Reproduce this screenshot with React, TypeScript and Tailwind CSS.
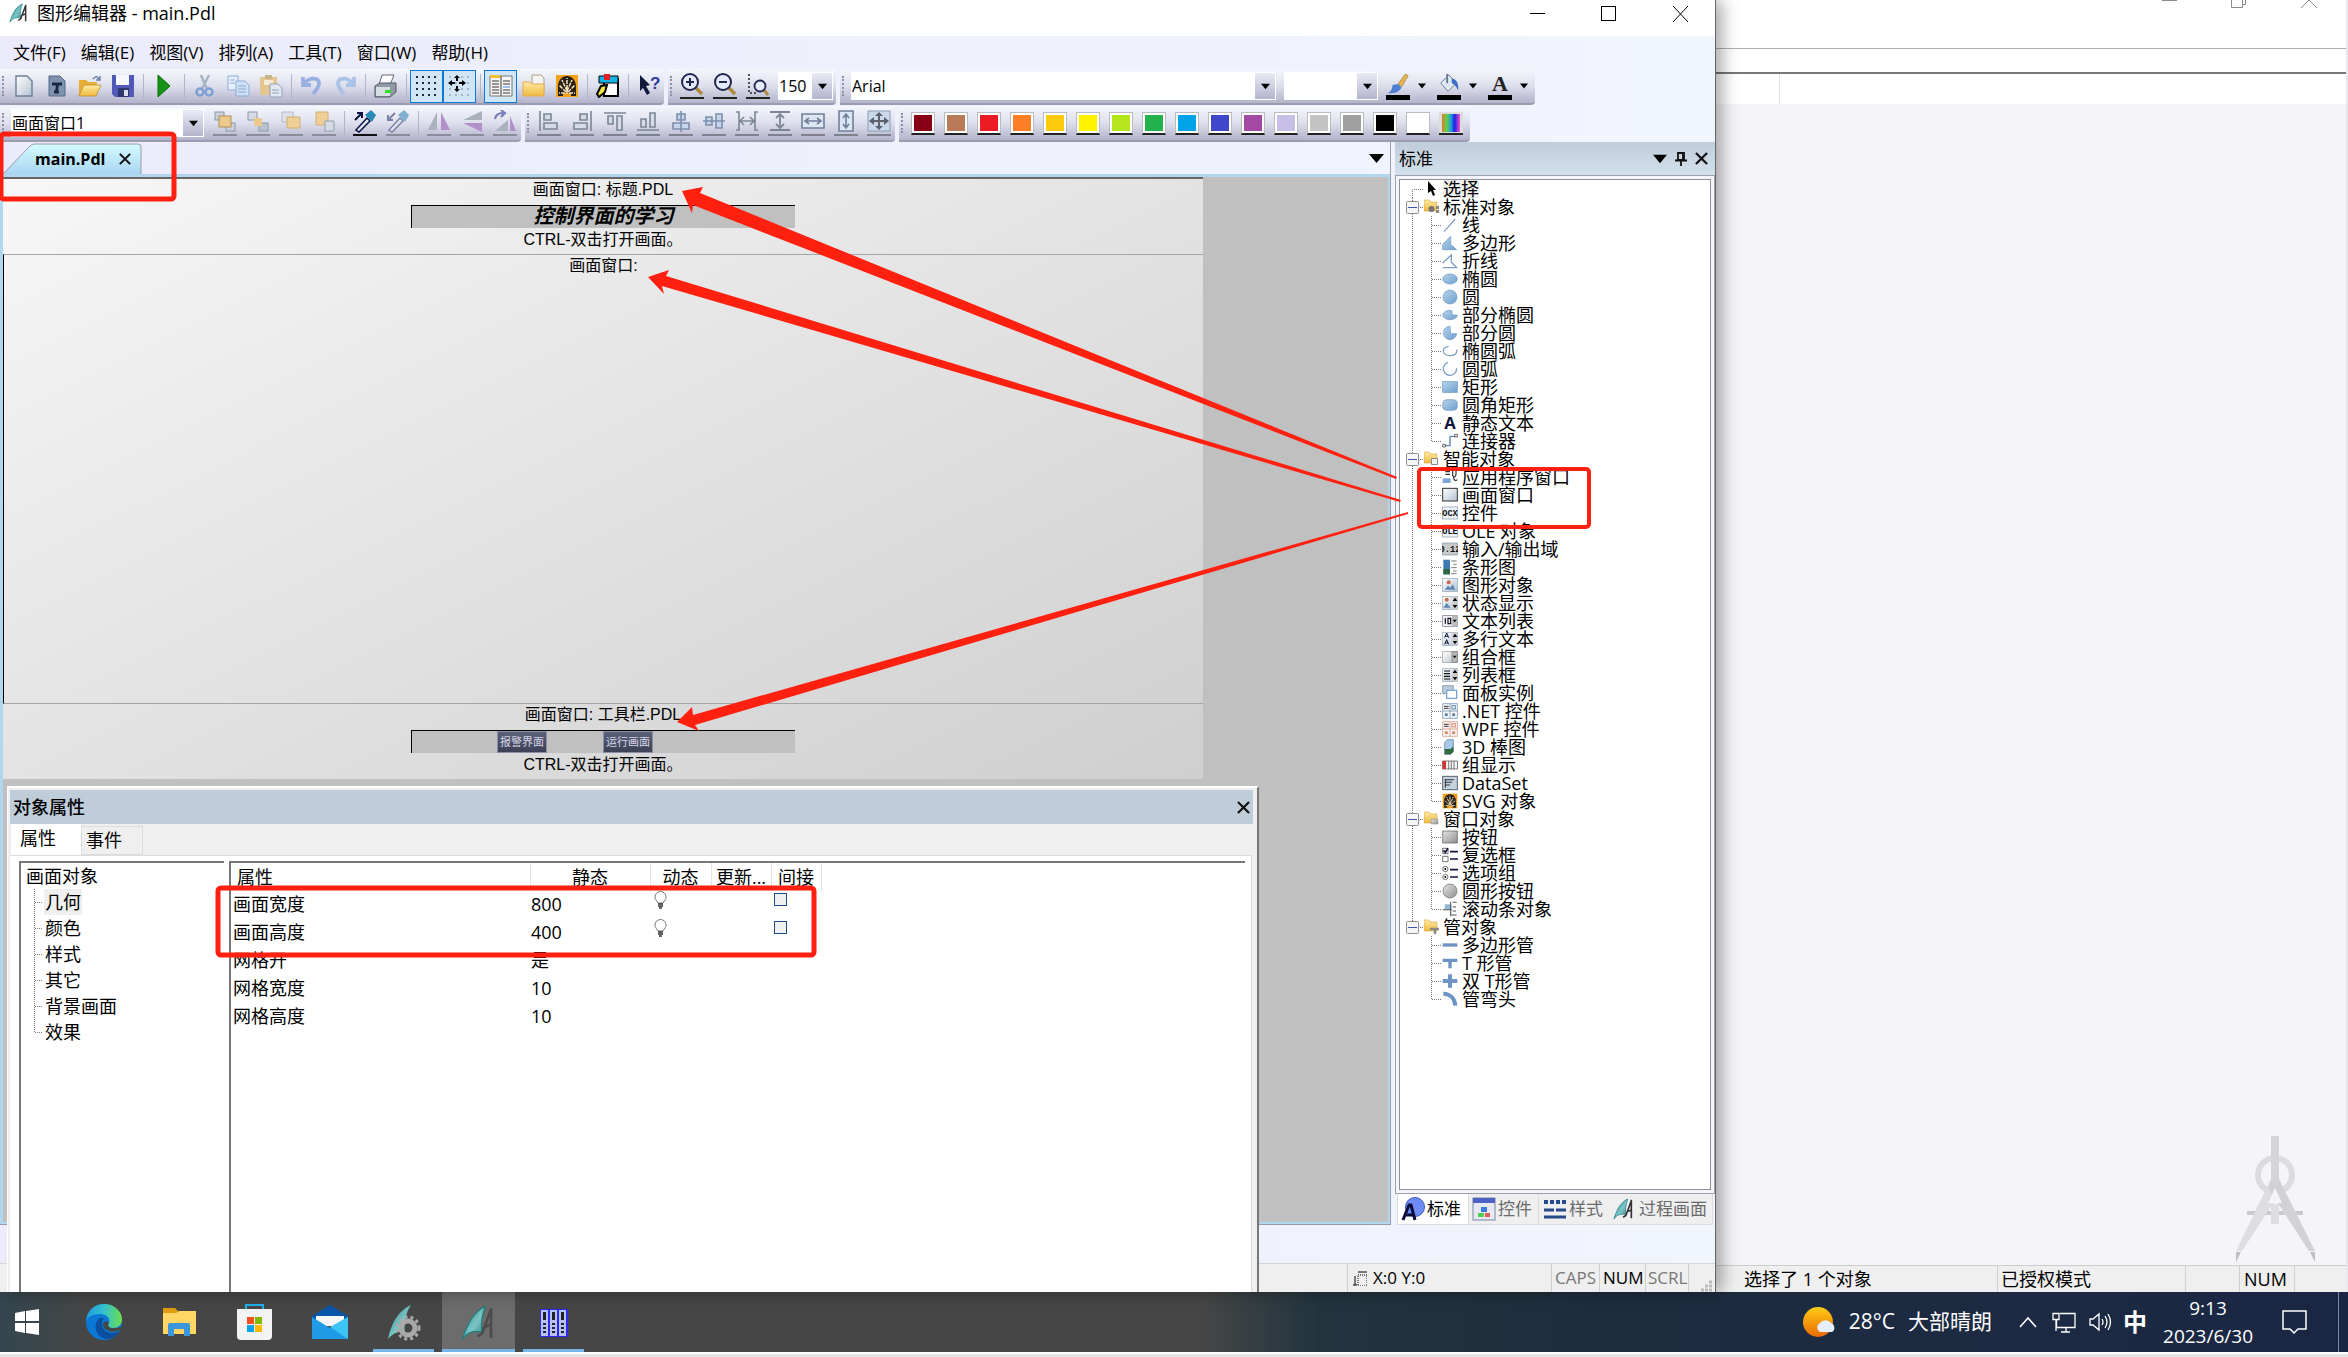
import type { ReactNode } from "react";

/* ---------- shared drawings ---------- */

const Svg = ({ size = 24, children }: { size?: number; children: ReactNode }) => (
  <svg width={size} height={size} viewBox="0 0 24 24" className="shrink-0" aria-hidden="true">
    {children}
  </svg>
);

const Sail = ({ size = 24, tip = "#333" }: { size?: number; tip?: string }) => (
  <Svg size={size}>
    <path d="M16 1C8 5 4 13 1 23c3-5 8-6 13-5-1-5 0-11 2-17Z" fill="url(#sail)" stroke="#1f7f7f" strokeWidth=".8" />
    <path d="m20 3-6 16-3 2M20 2v20M15 15l5-2" stroke={tip} strokeWidth="1.8" fill="none" />
  </Svg>
);

const Gradients = () => (
  <svg width="0" height="0" className="absolute" aria-hidden="true">
    <defs>
      <linearGradient id="sail" x1="0" y1="0" x2="1" y2="1">
        <stop offset="0" stopColor="#1f8a8a" />
        <stop offset=".55" stopColor="#7cc4c6" />
        <stop offset="1" stopColor="#1f7f80" />
      </linearGradient>
      <linearGradient id="blue" x1="0" y1="0" x2="1" y2="1">
        <stop offset="0" stopColor="#b5d3ec" />
        <stop offset="1" stopColor="#6f9fcc" />
      </linearGradient>
      <linearGradient id="gray" x1="0" y1="0" x2="1" y2="1">
        <stop offset="0" stopColor="#e4e4e4" />
        <stop offset="1" stopColor="#8f8f8f" />
      </linearGradient>
      <linearGradient id="paper" x1="0" y1="0" x2="1" y2="1">
        <stop offset="0" stopColor="#ffffff" />
        <stop offset="1" stopColor="#b3c2d0" />
      </linearGradient>
      <linearGradient id="folder" x1="0" y1="0" x2="0" y2="1">
        <stop offset="0" stopColor="#fdeaa4" />
        <stop offset="1" stopColor="#f0b93f" />
      </linearGradient>
      <linearGradient id="rainbow" x1="0" y1="0" x2="1" y2="0">
        <stop offset="0" stopColor="#e07a30" />
        <stop offset=".25" stopColor="#60d040" />
        <stop offset=".5" stopColor="#20a0e0" />
        <stop offset=".7" stopColor="#2020e0" />
        <stop offset="1" stopColor="#f050d0" />
      </linearGradient>
      <linearGradient id="sun" x1="0" y1="0" x2="0" y2="1">
        <stop offset="0" stopColor="#ffcc12" />
        <stop offset="1" stopColor="#ea6a0a" />
      </linearGradient>
      <linearGradient id="edge" x1="0" y1="0" x2="1" y2="0">
        <stop offset="0" stopColor="#1f9be0" />
        <stop offset=".5" stopColor="#35c1d0" />
        <stop offset="1" stopColor="#6be04a" />
      </linearGradient>
    </defs>
  </svg>
);

/* ---------- toolbars ---------- */

const flower = (
  <>
    <rect x="1" y="1" width="22" height="22" fill="#f5a11a" />
    <path d="M3 22V13C3 6 7 2 12 2s9 4 9 11v9h-5v-3H8v3Z" fill="#2a2018" />
    <path d="M12 20V4M12 17 7 6M12 17l5-11M11 18l-7-7M13 18l7-7M10 19H4M14 19h6" stroke="#f3e3c0" strokeWidth="1.5" strokeDasharray="4 1" />
  </>
);

const pipette = (main: string, dark: string, flip: boolean) => (
  <>
    <path d="M3 20 14 8l3 3L6 22Z" fill="#dfe8f0" stroke={dark} strokeWidth="1.5" />
    <path d="m12 5 7 7 4-7-5-5Z" fill={main} />
    <path d={flip ? "M9 3 2 10M2 5v5h5" : "M2 10l7-7M4 3h5v5"} stroke={dark} strokeWidth="2" fill="none" />
  </>
);

const magnifier = (inner: ReactNode) => (
  <>
    <path d="m15 14 7 7" stroke="#b08a3c" strokeWidth="3.5" />
    <circle cx="10" cy="9" r="8" fill="#e4ebfa" stroke="#23264e" strokeWidth="2" />
    {inner}
  </>
);

const stack = (a: string, b: string, front: ReactNode) => (
  <>
    <rect x="2" y="2" width="9" height="8" fill={a} stroke="#8d99a8" />
    <rect x="13" y="13" width="9" height="8" fill={b} stroke="#8d99a8" />
    {front}
  </>
);

const tools: Record<string, ReactNode> = {
  new: <path d="M4 2h11l5 5v15H4Z" fill="url(#paper)" stroke="#6c7f98" strokeWidth="1.4" />,
  template: (
    <>
      <path d="M4 2h11l5 5v15H4Z" fill="#7f92ae" stroke="#566a88" />
      <path d="M7 10h10M12.500 10l-1 8M9 18h5" stroke="#1b2744" strokeWidth="2.8" />
    </>
  ),
  open: (
    <>
      <path d="M1 6h7l2 2h9v4H6L1 22Z" fill="#e7ae35" />
      <path d="M6 11h17l-5 11H1Z" fill="url(#folder)" stroke="#bb8520" strokeWidth=".7" />
      <path d="M15 5q4-5 6 1M22 2v4h-4" stroke="#6c83a8" strokeWidth="1.5" fill="none" />
    </>
  ),
  save: (
    <>
      <path d="M1 1h22v22H4l-3-3Z" fill="#5058b8" />
      <path d="M5 1h13v10H5Z" fill="#f5f7ff" />
      <path d="M7 14h11v9H7Z" fill="#2f376e" />
      <path d="M13 16h4v6h-4Z" fill="#dde" />
    </>
  ),
  run: <path d="m6 1 12 11L6 23Z" fill="#179217" stroke="#0b6d0b" />,
  cut: (
    <>
      <path d="m8 1 6 14M16 1 9 15" stroke="#a9b5c5" strokeWidth="2.5" />
      <circle cx="7" cy="18" r="3.5" stroke="#7c9fd4" strokeWidth="2.5" fill="none" />
      <circle cx="16" cy="18" r="3.5" stroke="#7c9fd4" strokeWidth="2.5" fill="none" />
    </>
  ),
  copy: (
    <>
      <path d="M2 2h10v14H2Z" fill="#e6effb" stroke="#8eabd6" />
      <path d="M10 7h9l4 4v11H10Z" fill="#cfe0f6" stroke="#8eabd6" />
      <path d="M4 6h5M4 9h5M12 12h8M12 15h8M12 18h8" stroke="#8eabd6" />
    </>
  ),
  paste: (
    <>
      <path d="M1 3h17v18H1Z" fill="#e3c68f" />
      <path d="M6 1h7v4H6Z" fill="#c5b48c" />
      <path d="M5 6h9v5H5Z" fill="#f4ecda" />
      <path d="M11 10h8l4 4v9H11Z" fill="#e1e7f0" stroke="#93a2b8" />
      <path d="M13 16h7M13 19h7" stroke="#93a2b8" />
    </>
  ),
  undo: <path d="M3 3v8h8M4 10C8 4 18 2 19 9c0 5-3 7-6 11" stroke="#98afe2" strokeWidth="3.8" fill="none" />,
  redo: <path d="M21 3v8h-8M20 10C16 4 6 2 5 9c0 5 3 7 6 11" stroke="#a9c3e8" strokeWidth="3.8" fill="none" />,
  print: (
    <>
      <path d="M8 1h12l-4 10H5Z" fill="#fff" stroke="#667" />
      <path d="M1 12 6 9h16v9l-6 5H1Z" fill="#8f9aa5" stroke="#4d5861" />
      <path d="M2 13h14v9H2Z" fill="#d7dde3" />
      <path d="M11 16h6v3h-6Z" fill="#2ee01e" />
    </>
  ),
  grid: <path d="M1 3h22M1 9h22M1 15h22M1 21h22" stroke="#1f2937" strokeWidth="2" strokeDasharray="2 4" />,
  snap: (
    <>
      <path d="M1 3h22M1 9h22M1 15h22M1 21h22" stroke="#98a5b3" strokeWidth="1.5" strokeDasharray="2 4" />
      <path d="m9 1-3 3h6ZM9 18l-3-3h6ZM0 9l4-3v6ZM18 9l-4-3v6Z" fill="#000" />
      <path d="M9 3v4M9 12v4M3 9h4M11 9h4" stroke="#000" strokeWidth="2" />
    </>
  ),
  library: (
    <>
      <path d="M1 2h11v20H1ZM12 2h11v20H12Z" fill="#f5f5f5" stroke="#777" />
      <path d="M1 1h10v3H1Z" fill="#f0c030" />
      <path d="M3 7h7M3 10h7M3 13h7M3 16h7M3 19h7M14 7h7M14 10h7M14 16h7M14 19h7" stroke="#777" strokeWidth="1.3" />
      <path d="M14 13h7" stroke="#3f8be0" />
    </>
  ),
  folders: (
    <>
      <path d="M10 1h9l3 3v12H10Z" fill="#f3f3f3" stroke="#b0a080" />
      <path d="M1 8h7l2 2h12v12H1Z" fill="url(#folder)" stroke="#e0a94d" />
    </>
  ),
  svg: flower,
  report: (
    <>
      <path d="M8 5h14v17H8Z" fill="#fff" stroke="#000" strokeWidth="2" />
      <path d="M3 2h19v7H3Z" fill="#12b5e8" stroke="#000" />
      <path d="M8 0h6v6H8Z" fill="#e02020" />
      <path d="m1 20 4-8 6-1-2 7-6 5Z" fill="#f5e93c" stroke="#000" strokeWidth="2" />
    </>
  ),
  help: (
    <>
      <path d="m3 1 10 10-4 1 4 7-3 2-4-7-3 3Z" fill="#111a3c" />
      <text x="13" y="15" fontSize="17" fontWeight="700" fill="#2c3b9c" fontFamily="Liberation Sans">?</text>
    </>
  ),
  zoomIn: magnifier(<path d="M6 9h8M10 5v8" stroke="#23264e" strokeWidth="2" />),
  zoomOut: magnifier(<path d="M6 9h8" stroke="#23264e" strokeWidth="2" />),
  zoomArea: (
    <>
      <path d="M3 1v19h8" stroke="#222" strokeWidth="1.5" strokeDasharray="2 2" fill="none" />
      <path d="m18 17 4 5" stroke="#b08a3c" strokeWidth="3" />
      <circle cx="14" cy="13" r="5.500" fill="#e4ebfa" stroke="#23264e" strokeWidth="1.8" />
    </>
  ),
  front: stack("#c9d2dc", "#c9d2dc", <rect x="6" y="6" width="12" height="11" fill="#eec98c" stroke="#b08f5c" />),
  back: stack("#d4dbe3", "#b7c2ce", <rect x="8" y="8" width="8" height="8" fill="#eec98c" />),
  forward: (
    <>
      <path d="M3 2h11v10H3Z" fill="#dfe2e6" stroke="#b6bcc5" />
      <path d="M8 7h13v11H8Z" fill="#eecf98" stroke="#cfae78" />
    </>
  ),
  backward: (
    <>
      <path d="M4 2h12v13H4Z" fill="#eecf98" stroke="#cfae78" />
      <path d="M13 11h9v10h-9Z" fill="#d4dbe3" stroke="#93a0ae" />
    </>
  ),
  pick: pipette("#2c8ab8", "#0c1240", false),
  apply: pipette("#7fb0cf", "#7c82a5", true),
  mirrorH: (
    <>
      <path d="M10 2v18H1Z" fill="#a9b2bc" />
      <path d="M14 2v18h9Z" fill="#b48fc9" />
    </>
  ),
  mirrorV: (
    <>
      <path d="M22 1v9H3Z" fill="#a9b2bc" />
      <path d="M22 22v-9H3Z" fill="#b48fc9" />
    </>
  ),
  rotate: (
    <>
      <path d="M15 10v11H2Z" fill="#a9b2bc" />
      <path d="M17 6v15h6Z" fill="#b48fc9" />
      <path d="M2 9q1-6 8-6M8 0l4 3-4 4" stroke="#7378b8" strokeWidth="2" fill="none" />
    </>
  ),
  left: <path d="M3 1v20M7 4h7v6H7ZM7 13h13v6H7Z" fill="#d5dce6" stroke="#7c8694" strokeWidth="1.6" />,
  right: <path d="M21 1v20M10 4h7v6h-7ZM4 13h13v6H4Z" fill="#d5dce6" stroke="#7c8694" strokeWidth="1.6" />,
  top: <path d="M1 3h22M5 6h5v8H5ZM14 6h5v14h-5Z" fill="#d5dce6" stroke="#7c8694" strokeWidth="1.6" />,
  bottom: <path d="M1 20h22M5 9h5v8H5ZM14 3h5v14h-5Z" fill="#d5dce6" stroke="#7c8694" strokeWidth="1.6" />,
  midV: <path d="M12 1v21M8 4h8v6H8ZM4 13h16v6H4Z" fill="#c6d5ea" stroke="#7c8fae" strokeWidth="1.6" />,
  midH: <path d="M1 11h22M4 7h6v8H4ZM14 4h6v14h-6Z" fill="#c6d5ea" stroke="#7c8fae" strokeWidth="1.6" />,
  spaceH: <path d="M1 2h3v18H1M23 2h-3v18h3M5 11h14M9 7l-4 4 4 4M15 7l4 4-4 4" fill="none" stroke="#7c8694" strokeWidth="1.6" />,
  spaceV: <path d="M2 2h20M2 20h20M12 4v14M8 8l4-4 4 4M8 14l4 4 4-4" fill="none" stroke="#7c8694" strokeWidth="1.8" />,
  sameW: <path d="M1 4h22v14H1ZM4 11h16M8 8l-4 3 4 3M16 8l4 3-4 3" fill="#dce6f3" stroke="#70809a" strokeWidth="1.6" />,
  sameH: <path d="M5 1h14v20H5ZM12 4v14M9 8l3-4 3 4M9 14l3 4 3-4" fill="#dce6f3" stroke="#70809a" strokeWidth="1.6" />,
  same: (
    <>
      <rect x="1" y="1" width="22" height="20" fill="#c9d8ea" stroke="#8c9db4" />
      <path d="M12 2 8 6h3v4H7V7l-5 4 5 4v-3h4v4H8l4 4 4-4h-3v-4h4v3l5-4-5-4v3h-4V6h3Z" fill="#5b626d" />
    </>
  ),
  brush: (
    <>
      <path d="m12 12 8-11 3 2-7 12Z" fill="#e7b549" stroke="#94703a" strokeWidth=".7" />
      <path d="M1 22q5-3 5-9l6-1 4 4q-4 7-15 6Z" fill="#4d7ed2" />
    </>
  ),
  bucket: (
    <>
      <path d="m3 11 9-9 8 9-9 9Z" fill="#dfe7f1" stroke="#63788f" />
      <path d="M10 1v10" stroke="#63788f" strokeWidth="2" />
      <path d="M15 6q8 1 7 13-3-6-7-8Z" fill="#3c6fc4" />
    </>
  ),
};

const ToolButton = ({ name, label, active, underline }: { name: string; label: string; active?: boolean; underline?: string }) => (
  <button
    type="button"
    aria-label={label}
    className={
      active
        ? "flex h-[33px] w-[33px] shrink-0 flex-col items-center justify-center border border-[#0a7ad6] bg-[#d0e5f5]"
        : "flex h-[33px] w-[33px] shrink-0 flex-col items-center justify-center"
    }
  >
    <Svg>{tools[name]}</Svg>
    {underline && <span className="h-[2px] w-6" style={{ background: underline }} />}
  </button>
);

const Sep = () => (
  <span className="flex w-2 shrink-0 justify-center">
    <span className="h-6 w-px bg-[#b3b4c4]" />
  </span>
);

const Grip = () => <span className="mx-[2px] h-5 w-[3px] shrink-0 border-l-2 border-dotted border-[#8d8fa6]" />;

const Arrow = ({ size = 10 }: { size?: number }) => (
  <svg width={size} height={size} viewBox="0 0 10 10" className="shrink-0" aria-hidden="true">
    <path d="M0 2h10L5 8Z" fill="#000" />
  </svg>
);

const Combo = ({ label, value, className }: { label: string; value: string; className: string }) => (
  <div className={`flex h-[28px] items-stretch border border-white bg-white ${className}`}>
    <select aria-label={label} className="min-w-0 flex-1 appearance-none bg-white text-[16px] leading-[26px] text-black outline-none">
      <option>{value}</option>
    </select>
    <span className="pointer-events-none flex w-[20px] items-center justify-center bg-linear-to-b from-[#e9ebf6] to-[#b4b5cd]">
      <Arrow size={9} />
    </span>
  </div>
);

const bar = "flex h-[36px] items-center rounded-br border-b-2 border-[#9c9cb0] bg-linear-to-b from-[#f5f7fd] via-[#dddfec] to-[#b3b3cc]";

const swatches = [
  "#880015", "#b97a57", "#ed1c24", "#ff7f27", "#ffc90e", "#fff200", "#b5e61d", "#22b14c",
  "#00a2e8", "#3f48cc", "#a349a4", "#c8bfe7", "#c3c3c3", "#9f9f9f", "#000000", "#ffffff",
];

const Toolbars = () => (
  <div className="flex flex-col gap-px">
    <div className="flex gap-1">
      <div className={`${bar} w-[664px]`}>
        <Grip />
        <ToolButton name="new" label="新建" />
        <ToolButton name="template" label="模板" />
        <ToolButton name="open" label="打开" />
        <ToolButton name="save" label="保存" />
        <Sep />
        <ToolButton name="run" label="运行" />
        <Sep />
        <ToolButton name="cut" label="剪切" />
        <ToolButton name="copy" label="复制" />
        <ToolButton name="paste" label="粘贴" />
        <Sep />
        <ToolButton name="undo" label="撤消" />
        <ToolButton name="redo" label="重做" />
        <Sep />
        <ToolButton name="print" label="打印" />
        <Sep />
        <ToolButton name="grid" label="网格" active />
        <ToolButton name="snap" label="对齐网格" active />
        <Sep />
        <ToolButton name="library" label="属性窗口" active />
        <ToolButton name="folders" label="库" />
        <ToolButton name="svg" label="SVG" />
        <Sep />
        <ToolButton name="report" label="动态向导" />
        <Sep />
        <ToolButton name="help" label="帮助" />
      </div>
      <div className={`${bar} w-[168px]`}>
        <Grip />
        <ToolButton name="zoomIn" label="放大" underline="#222" />
        <ToolButton name="zoomOut" label="缩小" underline="#222" />
        <ToolButton name="zoomArea" label="缩放区域" underline="#222" />
        <Combo label="缩放" value="150" className="ml-1 w-[55px]" />
      </div>
      <div className={`${bar} w-[695px]`}>
        <Grip />
        <Combo label="字体" value="Arial" className="ml-1 w-[425px]" />
        <Combo label="字号" value="" className="ml-2 w-[94px]" />
        {["brush", "bucket"].map((n) => (
          <div key={n} className="ml-1 flex items-center">
            <button type="button" aria-label={n} className="flex w-8 flex-col items-center">
              <Svg size={22}>{tools[n]}</Svg>
              <span className="h-[5px] w-6 bg-black" />
            </button>
            <span className="flex w-[15px] justify-center"><Arrow size={8} /></span>
          </div>
        ))}
        <div className="ml-1 flex items-center">
          <button type="button" className="flex w-8 flex-col items-center">
            <span className="h-[22px] font-['Liberation_Serif',serif] text-[22px] leading-[22px] font-bold text-[#222]">A</span>
            <span className="h-[5px] w-6 bg-black" />
          </button>
          <span className="flex w-[15px] justify-center"><Arrow size={8} /></span>
        </div>
      </div>
    </div>
    <div className="flex gap-1">
      <div className={`${bar} w-[521px]`}>
        <Grip />
        <Combo label="对象" value="画面窗口1" className="mx-1 w-[193px]" />
        {["front", "back", "forward", "backward"].map((n) => (
          <ToolButton key={n} name={n} label={n} underline="#8a8b9b" />
        ))}
        <Sep />
        <ToolButton name="pick" label="复制属性" underline="#111" />
        <ToolButton name="apply" label="分配属性" underline="#8a8b9b" />
        <Sep />
        {["mirrorH", "mirrorV", "rotate"].map((n) => (
          <ToolButton key={n} name={n} label={n} underline="#8a8b9b" />
        ))}
      </div>
      <div className={`${bar} w-[370px]`}>
        <Grip />
        {["left", "right", "top", "bottom", "midV", "midH", "spaceH", "spaceV", "sameW", "sameH", "same"].map((n) => (
          <ToolButton key={n} name={n} label={n} underline="#80818f" />
        ))}
      </div>
      <div className={`${bar} w-[571px]`}>
        <Grip />
        {swatches.map((c) => (
          <button key={c} type="button" aria-label={c} className="flex h-[33px] w-[33px] shrink-0 items-center justify-center">
            <span className="h-[23px] w-6 border border-b-2 border-[#bcbcbc] border-b-[#222] bg-white p-[2px]">
              <span className="block h-full" style={{ background: c }} />
            </span>
          </button>
        ))}
        <button type="button" aria-label="调色板" className="flex h-[33px] w-[33px] shrink-0 items-center justify-center">
          <svg width="24" height="23" aria-hidden="true">
            <rect width="24" height="22" fill="#ddd" />
            <rect x="3" y="2" width="18" height="18" fill="url(#rainbow)" />
            <rect y="21" width="24" height="2" fill="#222" />
          </svg>
        </button>
      </div>
    </div>
  </div>
);

/* ---------- object palette ---------- */

const chooser = (
  <>
    <rect x="16" y="2" width="7" height="20" fill="#ccc" />
    <path d="M16 9h7l-3.500-5ZM16 15h7l-3.500 5Z" fill="#000" />
  </>
);
const frame = <rect x="1" y="2" width="22" height="20" fill="url(#paper)" stroke="#8fa5bb" />;
const tiny = (t: string, fill: string) => (
  <>
    <rect x="1" y="3" width="22" height="18" fill={fill} stroke="#7e93a8" />
    <text x="12" y="17" fontSize="13" textAnchor="middle" fontWeight="700" fill="#111" fontFamily="Liberation Sans Narrow, Liberation Mono">{t}</text>
  </>
);
const grids = (c: string) => (
  <>
    <path d="M1 1h22v22H1ZM12 1v22M1 12h22" fill="#f7f7f7" stroke={c} />
    <path d="M3 5h7M3 8h7" stroke="#333" strokeWidth="1.5" />
    <rect x="15" y="4" width="5" height="5" fill="none" stroke={c} strokeWidth="1.5" />
    <circle cx="6.500" cy="17.500" r="2.500" fill={c} />
    <circle cx="17.500" cy="17.500" r="2.500" fill={c} />
  </>
);

const shapes: Record<string, ReactNode> = {
  线: <path d="M3 22 20 3" stroke="#7f9fc6" strokeWidth="2" />,
  多边形: <path d="M1 22V14L13 2v12l9 8Z" fill="url(#blue)" stroke="#6e95c0" />,
  折线: <path d="M1 15 14 3v11l8 8H1" stroke="#7f9fc6" strokeWidth="2" fill="none" />,
  椭圆: <ellipse cx="12" cy="12" rx="11" ry="7.500" fill="url(#blue)" stroke="#6e95c0" />,
  圆: <circle cx="12" cy="12" r="10.500" fill="url(#blue)" stroke="#6e95c0" />,
  部分椭圆: <path d="M12 5A11 7 0 1 0 23 12H15V6Z" fill="url(#blue)" stroke="#6e95c0" />,
  部分圆: <path d="M12 2A10 10 0 1 0 22 13H13Z" fill="url(#blue)" stroke="#6e95c0" />,
  椭圆弧: <path d="M10 5C-2 7 0 18 12 19q11 0 10-9" stroke="#7f9fc6" strokeWidth="2" fill="none" />,
  圆弧: <path d="M9 2a10 10 0 1 0 13 9" stroke="#7f9fc6" strokeWidth="2" fill="none" />,
  矩形: <rect x="1" y="4" width="22" height="16" fill="url(#blue)" stroke="#6e95c0" />,
  圆角矩形: <rect x="1" y="4" width="22" height="16" rx="6" fill="url(#blue)" stroke="#6e95c0" />,
  静态文本: <text x="12" y="21" fontSize="25" fontWeight="700" textAnchor="middle" fill="#14143c" fontFamily="Open Sans">A</text>,
  连接器: (
    <>
      <path d="M4 19h8V5h8" stroke="#5b80b0" strokeWidth="2" fill="none" />
      <path d="M1 17h4v4H1ZM19 2h4v4h-4Z" fill="#fff" stroke="#222" />
    </>
  ),
  应用程序窗口: (
    <>
      <path d="M1 14h12v7H1Z" fill="#7fa5d8" />
      <path d="M5 4h7M5 8h7M16 3v7q4 4 5-2V3M17 12q2 8 6 4" stroke="#333" strokeWidth="1.8" fill="none" />
    </>
  ),
  画面窗口: <rect x="1" y="2" width="22" height="19" fill="url(#paper)" stroke="#333" strokeWidth="1.500" />,
  控件: tiny("OCX", "#eef4fa"),
  "OLE 对象": tiny("OLE", "#eef4fa"),
  "输入/输出域": tiny("0.12", "#c9c9c9"),
  条形图: (
    <>
      <path d="M2 1h10v22H2Z" fill="#3f7ab5" />
      <path d="M2 15h10v8H2Z" fill="#2e6a3c" />
      <path d="M14 3h8M17 8h5M14 13h8M17 18h5M14 22h8" stroke="#777" strokeWidth="1.5" />
    </>
  ),
  图形对象: (
    <>
      {frame}
      <circle cx="10" cy="8" r="3" fill="#d0664a" />
      <path d="m4 19 5-6 3 3 4-5 4 8Z" fill="#5f86b5" />
    </>
  ),
  状态显示: (
    <>
      {frame}
      <circle cx="7" cy="7" r="3" fill="#d0664a" />
      <path d="m2 19 5-7 6 7Z" fill="#5f86b5" />
      {chooser}
    </>
  ),
  文本列表: (
    <>
      <rect x="1" y="4" width="22" height="16" fill="#eef" stroke="#777" />
      <path d="M5 8v8M9 8h4v8H9Z" stroke="#111" strokeWidth="1.8" fill="none" />
      <path d="M15 4h8v16h-8Z" fill="#bbb" />
      <path d="M16 10h6l-3 4Z" />
    </>
  ),
  多行文本: (
    <>
      {frame}
      <path d="m4 10 3-7 3 7M5 8h4M4 20l3-7 3 7M5 18h4" stroke="#14143c" strokeWidth="1.5" fill="none" />
      {chooser}
    </>
  ),
  组合框: (
    <>
      <rect x="1" y="4" width="22" height="16" fill="url(#paper)" stroke="#999" />
      <path d="M15 4h8v16h-8Z" fill="#bbb" stroke="#777" />
      <path d="M16 10h6l-3 4Z" />
    </>
  ),
  列表框: (
    <>
      {frame}
      <path d="M3 6h9M3 10h9M3 14h9M3 18h9" stroke="#111" strokeWidth="1.8" />
      {chooser}
    </>
  ),
  面板实例: (
    <>
      <path d="M1 1h16v12H1Z" fill="#b9cad9" stroke="#6c7f92" />
      <path d="M7 8h15v12H7Z" fill="#fff" stroke="#79a3d8" strokeWidth="2" />
    </>
  ),
  ".NET 控件": grids("#5e86a8"),
  "WPF 控件": grids("#d88a6a"),
  "3D 棒图": (
    <>
      <path d="M4 5 8 1h9v18l-4 4H4Z" fill="#a9c9ea" stroke="#4c6f94" />
      <path d="M4 15h9l4-4v8l-4 4H4Z" fill="#2e6a3c" />
    </>
  ),
  组显示: (
    <>
      <rect x="1" y="6" width="22" height="12" fill="#f2f2f2" stroke="#444" />
      <rect x="1" y="6" width="5" height="12" fill="#e03030" />
      <path d="M10 6v12M14 6v12M18 6v12" stroke="#444" />
    </>
  ),
  DataSet: (
    <>
      <rect x="1" y="2" width="22" height="20" fill="#c6d3de" stroke="#55626e" strokeWidth="1.5" />
      <path d="M5 6v13M5 7h13M5 11h10M5 15h7" stroke="#333" strokeWidth="1.6" />
    </>
  ),
  "SVG 对象": flower,
  按钮: <path d="M1 3h22v18H1Z" fill="url(#gray)" stroke="#555" />,
  复选框: (
    <>
      <path d="M1 2h8v8H1ZM1 14h8v8H1Z" fill="#fff" stroke="#333" />
      <path d="m2 5 3 3 4-6M12 7h12M12 18h12" stroke="#14143c" strokeWidth="2.5" fill="none" />
    </>
  ),
  选项组: (
    <>
      <circle cx="5" cy="6" r="4" fill="#fff" stroke="#333" />
      <circle cx="5" cy="18" r="4" fill="#fff" stroke="#333" />
      <circle cx="5" cy="6" r="1.500" />
      <circle cx="5" cy="18" r="1.500" />
      <path d="M12 7h12M12 18h12" stroke="#14143c" strokeWidth="2.5" />
    </>
  ),
  圆形按钮: <circle cx="12" cy="12" r="10.500" fill="url(#gray)" stroke="#666" />,
  滚动条对象: (
    <>
      <path d="M4 5h10v8H4Z" fill="#8fb7d3" />
      <path d="M1 13h14M13 1v22M16 2h6M16 9h5M16 15h5M14 21h8" stroke="#555" strokeWidth="1.6" />
    </>
  ),
  多边形管: <path d="M1 12h22" stroke="#6f93c4" strokeWidth="5" />,
  "T 形管": <path d="M1 8h22M12 8v12" stroke="#6f93c4" strokeWidth="5" />,
  "双 T形管": <path d="M1 12h22M12 2v20" stroke="#6f93c4" strokeWidth="6" />,
  管弯头: <path d="M2 4c10 0 17 7 18 18" stroke="#6f93c4" strokeWidth="6" fill="none" />,
};

const groups = [
  { name: "标准对象", items: ["线", "多边形", "折线", "椭圆", "圆", "部分椭圆", "部分圆", "椭圆弧", "圆弧", "矩形", "圆角矩形", "静态文本", "连接器"] },
  {
    name: "智能对象",
    items: ["应用程序窗口", "画面窗口", "控件", "OLE 对象", "输入/输出域", "条形图", "图形对象", "状态显示", "文本列表", "多行文本", "组合框", "列表框", "面板实例", ".NET 控件", "WPF 控件", "3D 棒图", "组显示", "DataSet", "SVG 对象"],
  },
  { name: "窗口对象", items: ["按钮", "复选框", "选项组", "圆形按钮", "滚动条对象"] },
  { name: "管对象", items: ["多边形管", "T 形管", "双 T形管", "管弯头"] },
];

const dots = { stroke: "#7a7a7a", strokeDasharray: "1 1" };

const Palette = () => (
  <ul className="text-[18px] leading-[18px] whitespace-nowrap">
    <li className="flex h-[18px] items-center">
      <svg width="24" height="18" className="shrink-0" aria-hidden="true">
        <path d="M12.500 18v-8.500h11" fill="none" {...dots} />
      </svg>
      <svg width="16" height="16" viewBox="0 0 16 16" className="mr-[3px] shrink-0" aria-hidden="true">
        <path d="M4 0v12l3-2 2 5 2-1-2-5h3Z" />
      </svg>
      <span className="bg-[#efefef]">选择</span>
    </li>
    {groups.map((g, gi) => (
      <li key={g.name}>
        <div className="flex h-[18px] items-center">
          <svg width="24" height="18" className="shrink-0" aria-hidden="true">
            <path d={gi === groups.length - 1 ? "M12.500 0v9" : "M12.500 0v18"} {...dots} />
            <path d="M18 9.500h6" {...dots} />
            <rect x="6.500" y="3.500" width="12" height="12" rx="1" fill="#f5f5f5" stroke="#8f8f8f" />
            <path d="M8 9.500h9" stroke="#3b5aa8" />
          </svg>
          <svg width="16" height="16" viewBox="0 0 16 16" className="mr-[3px] shrink-0" aria-hidden="true">
            <path d="M0 1h5l2 2h6v9H0Z" fill="url(#folder)" stroke="#d9a53c" strokeWidth=".6" />
            {gi === 0 && (
              <>
                <circle cx="7.500" cy="10" r="3" fill="#777" />
                <path d="M12 7h3v3h-3ZM12 11h3v3h-3Z" fill="#888" />
              </>
            )}
            {gi === 1 && <path d="M7.500 7.500h6v6h-6Z" fill="#f2f2f2" stroke="#888" />}
            {gi === 2 && <path d="M7 8h7v5H7Z" fill="url(#gray)" stroke="#999" strokeWidth=".6" />}
            {gi === 3 && <path d="M6 10h9M11 10v5" stroke="#8a8a8a" strokeWidth="2.500" />}
          </svg>
          <span>{g.name}</span>
        </div>
        <ul>
          {g.items.map((item, i) => (
            <li key={item} className="flex h-[18px] items-center">
              <svg width="42" height="18" className="shrink-0" aria-hidden="true">
                {gi < groups.length - 1 && <path d="M12.500 0v18" {...dots} />}
                <path d={i === g.items.length - 1 ? "M31.500 0v9" : "M31.500 0v18"} {...dots} />
                <path d="M32 9.500h9" {...dots} />
              </svg>
              <span className="mr-1"><Svg size={16}>{shapes[item]}</Svg></span>
              <span>{item}</span>
            </li>
          ))}
        </ul>
      </li>
    ))}
  </ul>
);

const Cross = ({ size = 14 }: { size?: number }) => (
  <svg width={size} height={size} viewBox="0 0 14 14" aria-hidden="true">
    <path d="m1 1 12 12M13 1 1 13" stroke="#111" strokeWidth="2.4" />
  </svg>
);

const PalettePanel = () => (
  <aside className="ml-1 flex w-[320px] shrink-0 flex-col">
    <header className="flex h-[33px] items-center gap-2 bg-linear-to-b from-[#bfccda] to-[#d3e0ed] pr-[7px] pl-1 text-[17px]">
      <span className="flex-1">标准</span>
      <Arrow size={14} />
      <svg width="12" height="14" viewBox="0 0 12 14" aria-hidden="true">
        <path d="M3 1h6v7H3ZM8 1v7M0 8.500h12M6 9v5" fill="none" stroke="#111" strokeWidth="1.800" />
      </svg>
      <button type="button" aria-label="关闭"><Cross size={13} /></button>
    </header>
    <div className="flex flex-1 flex-col border border-[#a0a0a8] bg-[#f3f4fc] p-[3px]">
      <div className="flex-1 border border-[#8e9097] bg-white">
        <Palette />
      </div>
    </div>
    <nav className="flex h-[31px] pr-[2px] pl-[2px] text-[17px] text-[#6b6b6b]">
      <button type="button" className="flex w-[72px] items-center gap-[2px] border border-t-0 border-[#dcdcdc] bg-white pl-[3px] text-black">
        <Svg>
          <circle cx="14" cy="10" r="9.500" fill="#6d8cf5" stroke="#3a55c0" />
          <path d="m2 23 6-15h2l4 15M4 18h9" stroke="#0c0c3c" strokeWidth="3" fill="none" />
        </Svg>
        标准
      </button>
      <button type="button" className="flex w-[70px] items-center gap-[2px] border-r border-b border-[#dcdcdc] bg-[#efefef] pl-[3px]">
        <Svg>
          <rect x="1" y="1" width="22" height="22" fill="#e6e9f2" stroke="#7d86a5" />
          <path d="M1 1h22v5H1Z" fill="#4a62c4" />
          <path d="M9 10h6v5H9Z" fill="#3c7be0" />
          <path d="M6 16h6v4H6Z" fill="#4fcf4f" />
          <path d="M13 16h5v4h-5Z" fill="#e85a5a" />
        </Svg>
        控件
      </button>
      <button type="button" className="flex w-[68px] items-center gap-[2px] border-b border-[#dcdcdc] bg-[#efefef] pl-1">
        <Svg>
          <path d="M1 5h22" stroke="#274a8a" strokeWidth="4" strokeDasharray="4 2" />
          <path d="M1 13h10M13 13h10M1 20h22" stroke="#274a8a" strokeWidth="3" />
        </Svg>
        样式
      </button>
      <button type="button" className="flex flex-1 items-center gap-1 border-r border-b border-[#dcdcdc] bg-[#efefef] pl-[6px]">
        <Sail size={22} />
        过程画面
      </button>
    </nav>
  </aside>
);

/* ---------- picture being edited ---------- */

const PictureWindow = ({ title, tall, children }: { title: string; tall?: boolean; children?: ReactNode }) => (
  <section
    className={
      tall
        ? "flex h-[450px] flex-col items-center border-y border-l border-[#a5a5a5] border-l-black"
        : "flex h-[75px] flex-col items-center"
    }
  >
    <h2 className="h-[26px] text-[16px] leading-[22px]">{title}</h2>
    {children && (
      <>
        <div className="flex h-[23px] w-[384px] justify-center border-t border-l border-black bg-[#c0c0c0]">{children}</div>
        <p className="text-[16px] leading-[24px]">CTRL-双击打开画面。</p>
      </>
    )}
  </section>
);

const Canvas = () => (
  <div className="min-h-0 flex-1 border-t-[3px] border-r-2 border-b-2 border-l-[3px] border-[#b0d6f2] bg-[#c0c0c0]">
    <div className="w-[1200px] border-t-2 border-[#666] bg-linear-to-br from-[#f7f7f7] to-[#cfcfcf] font-['Liberation_Sans','Noto_Sans_CJK_SC',sans-serif]">
      <PictureWindow title="画面窗口: 标题.PDL">
        <span className="text-[20px] leading-[21px] font-bold italic">控制界面的学习</span>
      </PictureWindow>
      <PictureWindow title="画面窗口:" tall />
      <PictureWindow title="画面窗口: 工具栏.PDL">
        <div className="flex w-full gap-[56px] pl-[85px]">
          {["报警界面", "运行画面"].map((t) => (
            <button key={t} type="button" className="h-[22px] w-[50px] border border-[#8a8fa5] bg-linear-to-b from-[#5b6178] to-[#3c4158] text-[11px] leading-[18px] whitespace-nowrap text-[#d5d5e5]">
              {t}
            </button>
          ))}
        </div>
      </PictureWindow>
    </div>
  </div>
);

/* ---------- object properties ---------- */

const properties = [
  { name: "画面宽度", value: "800", dynamic: true },
  { name: "画面高度", value: "400", dynamic: true },
  { name: "网格开", value: "是" },
  { name: "网格宽度", value: "10" },
  { name: "网格高度", value: "10" },
];

const PropertiesDialog = () => (
  <section className="absolute top-[786px] bottom-0 left-[7px] flex w-[1252px] flex-col border-t-2 border-r-2 border-l border-white border-r-[#777] bg-[#efefef] pt-[2px] pl-[2px] text-[18px]">
    <header className="mr-1 flex h-[34px] items-center justify-between bg-[#bfccda] pl-[3px]">
      <h2 className="text-[18px] font-medium">对象属性</h2>
      <button type="button" aria-label="关闭" className="mr-[3px]"><Cross size={13} /></button>
    </header>
    <nav className="flex h-[31px] items-end pl-px">
      <button type="button" className="h-[31px] w-[70px] bg-white pr-[16px] pb-[2px]">属性</button>
      <button type="button" className="h-[29px] w-[62px] border border-[#dcdcdc] pr-4">事件</button>
    </nav>
    <div className="mr-[5px] flex flex-1 gap-[5px] border-t border-r border-[#dcdcdc] bg-white pt-[5px] pl-[9px]">
      <ul className="w-[205px] border-t-2 border-l-2 border-[#777] leading-[26px]">
        <li className="pl-[5px]">画面对象</li>
        {["几何", "颜色", "样式", "其它", "背景画面", "效果"].map((t, i) => (
          <li key={t} className="flex h-[26px] pl-[9px]">
            <svg width="14" height="26" aria-hidden="true">
              <path d={i === 5 ? "M4.500 0v13.500" : "M4.500 0v26"} {...dots} />
              <path d="M5 13.500h8" {...dots} />
            </svg>
            <span className={i === 0 ? "bg-[#efefef] px-px" : "px-px"}>{t}</span>
          </li>
        ))}
      </ul>
      <div className="mr-[6px] flex-1 border-t-2 border-l-2 border-[#777]">
        <table className="w-full table-fixed border-collapse text-left whitespace-nowrap">
          <thead>
            <tr className="h-7">
              <th className="w-[299px] border-r border-[#e2e2e2] pl-[6px] font-normal">属性</th>
              <th className="w-[120px] border-r border-[#e2e2e2] text-center font-normal">静态</th>
              <th className="w-[61px] border-r border-[#e2e2e2] text-center font-normal">动态</th>
              <th className="w-[60px] border-r border-[#e2e2e2] text-center font-normal">更新...</th>
              <th className="w-[50px] border-r border-[#e2e2e2] text-center font-normal">间接</th>
              <th aria-label="空" />
            </tr>
          </thead>
          <tbody>
            {properties.map((p) => (
              <tr key={p.name} className="h-7 leading-[26px]">
                <td className="pl-[2px] align-top">{p.name}</td>
                <td className="pl-px align-top">{p.value}</td>
                <td className="pl-1 align-top">
                  {p.dynamic && (
                    <svg width="13" height="18" viewBox="0 0 13 18" aria-hidden="true">
                      <path d="M4 12C2 9 1 8 1 6a5 5 0 0 1 11 0c0 2-1 3-3 6Z" fill="#fff" stroke="#777" />
                      <path d="M4 13h5M4 15h5M5 17h3" stroke="#333" strokeWidth="1.500" />
                    </svg>
                  )}
                </td>
                <td />
                <td className="pl-[3px] align-top">
                  {p.dynamic && (
                    <input
                      type="checkbox"
                      aria-label={`${p.name} 间接`}
                      className="mt-[2px] block size-[13px] appearance-none border border-[#1d4f86] bg-[#f0f0f0]"
                    />
                  )}
                </td>
                <td />
              </tr>
            ))}
          </tbody>
        </table>
      </div>
    </div>
  </section>
);

/* ---------- windows ---------- */

const EditorWindow = () => (
  <main className="relative z-10 flex min-h-0 flex-col border-r border-[#666] bg-linear-to-r from-[#ebebfb] to-[#f1f5fd] shadow-[6px_0_16px_rgba(0,0,0,0.35)]">
    <header className="flex h-[36px] items-start gap-2 bg-white pl-[9px] text-[18px] leading-[26px]">
      <span className="pt-[3px]"><Sail size={20} /></span>
      <h1 className="flex-1">图形编辑器 - main.Pdl</h1>
      <div className="flex h-[27px] items-center gap-[56px] pr-[26px]">
        <button type="button" aria-label="最小化" className="h-px w-[15px] bg-black" />
        <button type="button" aria-label="最大化" className="size-[15px] border border-black" />
        <button type="button" aria-label="关闭">
          <svg width="17" height="16" viewBox="0 0 17 16" aria-hidden="true">
            <path d="m1 0 15 16M16 0 1 16" stroke="#000" />
          </svg>
        </button>
      </div>
    </header>
    <nav className="flex h-[33px] items-center gap-[15px] pl-[13px] text-[17px]">
      {["文件(F)", "编辑(E)", "视图(V)", "排列(A)", "工具(T)", "窗口(W)", "帮助(H)"].map((m) => (
        <button key={m} type="button">{m}</button>
      ))}
    </nav>
    <Toolbars />
    <div className="flex min-h-0 flex-1">
      <div className="flex min-w-0 flex-1 flex-col border-r border-b border-[#9a9aa6]">
        <div className="flex h-[32px] items-end justify-between pl-[3px]">
          <button type="button" className="relative flex h-[31px] w-[139px] items-center gap-[14px] pl-[32px] text-[16px] font-bold">
            <svg width="139" height="31" className="absolute top-0 left-0" aria-hidden="true">
              <defs>
                <linearGradient id="tab" x1="0" y1="0" x2="0" y2="1">
                  <stop offset="0" stopColor="#d3fbff" />
                  <stop offset="1" stopColor="#a9d6f2" />
                </linearGradient>
              </defs>
              <path d="M0 31 27 3q2-2 5-2h103q3 0 3 3v27" fill="url(#tab)" stroke="#9a9aa6" />
            </svg>
            <span className="relative">main.Pdl</span>
            <span className="relative"><Cross size={12} /></span>
          </button>
          <span className="pr-[6px] pb-2"><Arrow size={15} /></span>
        </div>
        <Canvas />
      </div>
      <PalettePanel />
    </div>
    <div className="h-[38px] shrink-0" />
    <footer className="flex h-[29px] shrink-0 items-stretch justify-end border-t border-[#d5d5d5] bg-[#efefef] text-[17px] leading-7 text-[#777]">
      <span className="flex w-[204px] items-center gap-[6px] border-l border-[#d0d0d0] pl-[5px] text-black">
        <svg width="14" height="15" viewBox="0 0 14 15" aria-hidden="true">
          <path d="M5 4h9v11H5Z" fill="none" stroke="#000" strokeDasharray="1 1" />
          <path d="M5 1h9M2 5v9M0 14h4" stroke="#000" />
        </svg>
        X:0 Y:0
      </span>
      <span className="w-[48px] border-l border-[#d0d0d0] pl-[3px]">CAPS</span>
      <span className="w-[46px] border-l border-[#d0d0d0] pl-[3px] text-black">NUM</span>
      <span className="w-[44px] border-x border-[#d0d0d0] pl-[2px]">SCRL</span>
      <svg width="26" height="28" aria-hidden="true">
        <path d="M12 26h12M16 22h8M20 18h4" stroke="#bbb" strokeWidth="3" strokeDasharray="3 1" />
      </svg>
    </footer>
    <PropertiesDialog />
  </main>
);

const BackWindow = () => (
  <section className="flex min-w-0 flex-col border-r-2 border-[#e8e8ec] bg-[#f5f4f9]">
    <div className="flex h-[49px] items-start justify-end gap-[54px] border-b border-[#b0b0b0] bg-white pr-[29px] text-[#8a8a8a]">
      <span className="h-px w-[15px] bg-[#8a8a8a]" />
      <svg width="16" height="9" aria-hidden="true"><path d="M.5 0v7.500h11V0M12 4.500h2.500V0" fill="none" stroke="#8a8a8a" /></svg>
      <svg width="16" height="9" aria-hidden="true"><path d="m0 8 8-8 8 8" fill="none" stroke="#8a8a8a" /></svg>
    </div>
    <div className="h-[25px] border-b-2 border-[#777] bg-white" />
    <div className="h-[30px] bg-white pl-[63px]"><div className="h-full w-px bg-[#e2e2e2]" /></div>
    <div className="flex flex-1 items-end justify-end pr-[30px] pb-[3px]">
      <svg width="81" height="127" viewBox="0 0 81 127" aria-hidden="true">
        <circle cx="40" cy="40" r="17" fill="none" stroke="#dcdce0" strokeWidth="6" />
        <path d="M12 78h56" stroke="#cacace" strokeWidth="4" />
        <path d="M40 50 5 116M40 50l36 66" stroke="#f5f4f9" strokeWidth="10" />
        <path d="M36 1h8v43h-8Z" fill="#d5d5d8" />
        <path d="M36 44h8l4 9L7 116l-6 0Z" fill="#dedee1" />
        <path d="M44 44h-8l-3 9 41 63h6Z" fill="#d2d2d5" />
        <path d="m40 53-7 15h14Z" fill="#f5f4f9" />
        <path d="M36 69h8v20h-8Z" fill="#dedee1" />
        <path d="M1 117h5l-5 10ZM80 117h-5l5 10Z" fill="#bdbdc2" />
      </svg>
    </div>
    <footer className="flex h-[27px] border-t border-[#ccc] bg-[#efefef] text-[18px] leading-[26px]">
      <span className="flex-1 border-r border-[#d0d0d0] pl-[28px]">选择了 1 个对象</span>
      <span className="w-[188px] border-r border-[#d0d0d0] pl-[3px]">已授权模式</span>
      <span className="w-[54px] border-r border-[#d0d0d0]" />
      <span className="w-[55px] border-r border-[#d0d0d0] pl-1">NUM</span>
      <span className="w-[51px]" />
    </footer>
  </section>
);

/* ---------- taskbar ---------- */

const Taskbar = () => (
  <footer className="flex h-[60px] shrink-0 items-center bg-linear-[90deg,#33464e_0,#464646_90px,#464646_1200px,#21343e_1320px,#1d2d3f_1600px,#1a2744_100%] text-white">
    <nav className="flex h-full items-center pl-[14px]">
      <button type="button" aria-label="开始" className="mr-[46px]">
        <svg width="26" height="26" viewBox="0 0 26 26" aria-hidden="true">
          <path d="M1 4 11 2v10H1ZM12 2l13-2v12H12ZM1 14h10v10L1 22ZM12 14h13v12l-13-2Z" fill="#fff" />
        </svg>
      </button>
      <button type="button" aria-label="Edge" className="mr-[41px]">
        <svg width="36" height="36" viewBox="0 0 36 36" aria-hidden="true">
          <circle cx="18" cy="18" r="18" fill="#0a78d4" />
          <path d="M0 17C1 6 9 0 18 0c11 0 18 8 18 15 0 6-4 9-9 9-4 0-6-2-4-5 2-5-3-9-9-9C7 10 2 13 0 17Z" fill="url(#edge)" />
          <path d="M14 14c-8 4-5 22 9 21 4-1 8-3 10-8-6 4-17 2-17-7 0-2 0-4 2-6Z" fill="#0c4fa0" />
          <path d="M17 20c0 6 8 10 17 6l2-4c-2 2-5 2-9 2-4 0-6-2-4-5-2-3-5-2-6 1Z" fill="#464646" />
        </svg>
      </button>
      <button type="button" aria-label="资源管理器" className="mr-[41px]">
        <svg width="33" height="30" viewBox="0 0 33 30" aria-hidden="true">
          <path d="M0 1h12l3 3v6H0Z" fill="#e39b10" />
          <path d="M0 6h13l3-2h17v23H0Z" fill="#ffd563" />
          <path d="M5 29V18q0-2 2-2h18q2 0 2 2v11h-6v-7H11v7Z" fill="#3a96dd" />
        </svg>
      </button>
      <button type="button" aria-label="Store" className="mr-[40px]">
        <svg width="35" height="36" viewBox="0 0 35 36" aria-hidden="true">
          <path d="M9 7V1h17v6" fill="none" stroke="#1fb0ee" strokeWidth="2" />
          <path d="M0 5h35v27q0 4-4 4H4q-4 0-4-4Z" fill="#f3f3f3" />
          <path d="M10 13h7v7h-7Z" fill="#f25022" />
          <path d="M18 13h7v7h-7Z" fill="#7fba00" />
          <path d="M10 21h7v7h-7Z" fill="#00a4ef" />
          <path d="M18 21h7v7h-7Z" fill="#ffb900" />
        </svg>
      </button>
      <button type="button" aria-label="邮件" className="mr-[25px]">
        <svg width="36" height="34" viewBox="0 0 36 34" aria-hidden="true">
          <path d="M0 11 18 0l18 11v5H0Z" fill="#0a56a8" />
          <path d="M4 11h28v10H4Z" fill="#f4f6f8" />
          <path d="m0 12 18 11L36 12v22H0Z" fill="#1f9be8" />
          <path d="m18 22 18-10v22Z" fill="#3cc4f5" />
        </svg>
      </button>
      <button type="button" aria-label="WinCC" className="mr-2 flex h-full w-[61px] items-center justify-center border-t-4 border-b-3 border-t-transparent border-b-[#76b5ea]">
        <svg width="34" height="36" viewBox="0 0 34 36" aria-hidden="true">
          <path d="M24 0C10 6 4 20 1 34c5-6 11-8 17-8-1-10 1-19 6-26Z" fill="url(#sail)" />
          <circle cx="21" cy="23" r="7" fill="none" stroke="#a9a9a9" strokeWidth="5" />
          <circle cx="21" cy="23" r="11" fill="none" stroke="#a9a9a9" strokeWidth="3" strokeDasharray="3 3" />
        </svg>
      </button>
      <button type="button" aria-label="图形编辑器" className="mr-2 flex h-full w-[73px] items-center justify-center border-t-4 border-b-3 border-t-transparent border-b-[#76b5ea] bg-[#6c6c6c]">
        <Sail size={36} tip="#4c4c4c" />
      </button>
      <button type="button" aria-label="变量管理" className="flex h-full w-[61px] items-center justify-center border-t-4 border-b-3 border-t-transparent border-b-[#76b5ea]">
        <svg width="28" height="28" viewBox="0 0 28 28" aria-hidden="true">
          <path d="M0 0h28v28H0Z" fill="#2a2af0" />
          <path d="M1 1h7v26H1ZM10 1h7v26h-7ZM19 1h7v26h-7Z" fill="#b9c3f3" />
          <path d="M4.500 3v8M13.500 3v8M22.500 3v8" stroke="#222" strokeWidth="3" />
          <path d="M4.500 14v12M13.500 14v12M22.500 14v12" stroke="#222" strokeWidth="3" strokeDasharray="2 2" />
        </svg>
      </button>
    </nav>
    <div className="ml-auto flex h-full items-center pr-[9px] text-[21px]">
      <svg width="34" height="32" viewBox="0 0 34 32" className="mr-[12px]" aria-hidden="true">
        <circle cx="15" cy="16" r="15" fill="url(#sun)" />
        <path d="M17 26a5 5 0 0 1 0-9 7 7 0 0 1 11 0 5 5 0 0 1 1 9Z" fill="#e6efff" />
      </svg>
      <span className="mr-[13px]">28°C</span>
      <span className="mr-[27px]">大部晴朗</span>
      <svg width="18" height="12" className="mr-[15px]" aria-hidden="true">
        <path d="m1 11 8-9 8 9" fill="none" stroke="#fff" strokeWidth="1.500" />
      </svg>
      <svg width="24" height="22" className="mr-[13px]" aria-hidden="true">
        <path d="M8 2.500h15v14H4.500V9M1 2.500h6v6H1ZM4 9v11M14 17v4M9 21h9" fill="none" stroke="#fff" strokeWidth="1.300" />
      </svg>
      <svg width="24" height="20" className="mr-[10px]" aria-hidden="true">
        <path d="M1 7h3l6-5v16l-6-5H1ZM13 7q2 3 0 6M16 4q4 6 0 12M19 2q5 8 0 16" fill="none" stroke="#fff" strokeWidth="1.300" />
      </svg>
      <span className="mr-[16px] text-[24px] leading-7 font-bold">中</span>
      <time className="mr-[29px] text-center text-[19px] leading-7">
        9:13
        <br />
        2023/6/30
      </time>
      <svg width="25" height="25" className="mr-[31px]" aria-hidden="true">
        <path d="M1 1h23v18h-8l-4 4-4-4H1Z" fill="none" stroke="#fff" strokeWidth="1.500" />
      </svg>
      <span className="h-full w-px bg-[#7c879a]" />
    </div>
  </footer>
);

/* ---------- callouts ---------- */

const Callouts = () => (
  <svg className="pointer-events-none absolute top-0 left-0 z-20 h-full w-full" aria-hidden="true">
    <g fill="none" stroke="#ff2010">
      <rect x="1" y="134" width="173" height="65" rx="3" strokeWidth="5" />
      <rect x="1419" y="469" width="170" height="58" rx="3" strokeWidth="4" />
      <rect x="218" y="888" width="596" height="67" rx="3" strokeWidth="5" />
    </g>
    <g fill="#ff2010">
      <path d="m682 191 21-4-3 6 697 284-1 2-703-274-1 8Z" />
      <path d="m648 277 21-7-3 6 735 224-1 2-738-216 2 8Z" />
      <path d="m677 722 15-15 1 8 715-203 0 2-713 211 4 6Z" />
    </g>
  </svg>
);

const App = () => (
  <div className="relative flex h-screen flex-col overflow-hidden bg-[#e6e6e8] font-['Open_Sans','Noto_Sans_CJK_SC',sans-serif] text-black">
    <Gradients />
    <div className="grid min-h-0 flex-1 grid-cols-[1716fr_632fr]">
      <EditorWindow />
      <BackWindow />
    </div>
    <Taskbar />
    <div className="h-[5px] shrink-0 border-t-2 border-white bg-[#e4e4e4]" />
    <Callouts />
  </div>
);

export default App;
